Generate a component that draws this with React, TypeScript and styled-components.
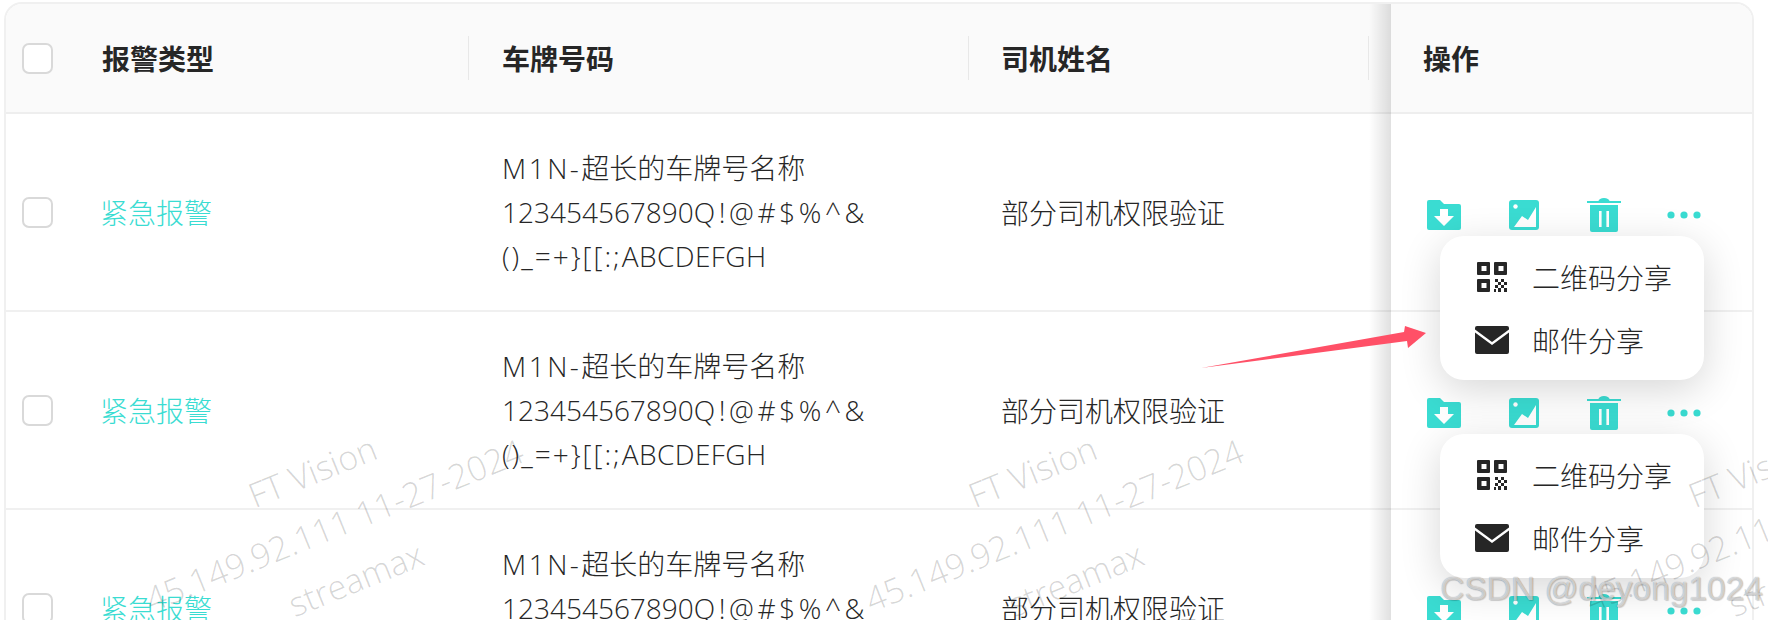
import React from 'react'
import styled, { createGlobalStyle, css } from 'styled-components'

const GlobalStyle = createGlobalStyle`
    html, body {
        margin: 0;
        padding: 0;
        height: 620px;
        overflow: hidden;
        background: #fff;
    }
    body {
        font-family: "Open Sans", "Noto Sans CJK SC", sans-serif;
        color: #262626;
    }
`

const CYAN = '#3adcd2'
const INK = '#262626'

const fixedEdge = css`
    &::before {
        content: '';
        position: absolute;
        left: -22px;
        top: 0;
        bottom: -2px;
        width: 22px;
        background: linear-gradient(to left, rgba(0, 0, 0, 0.12), rgba(0, 0, 0, 0));
    }
`

const Page = styled.div`
    position: relative;
    width: 1768px;
    height: 620px;
    overflow: hidden;
    padding: 2px 0 0 4px;
    box-sizing: border-box;
`

const Table = styled.div`
    width: 1750px;
    border: 2px solid #f0f0f0;
    border-bottom: none;
    border-radius: 18px 18px 0 0;
    box-sizing: border-box;
    overflow: hidden;
`

const HeaderRow = styled.div`
    display: grid;
    grid-template-columns: 62px 401px 500px 422px 361px;
    height: 108px;
    background: #fafafa;
    border-bottom: 2px solid #eeeeee;
`

const BodyRow = styled.div`
    display: grid;
    grid-template-columns: 62px 401px 500px 422px 361px;
    height: 196px;
    border-bottom: 2px solid #f0f0f0;
`

const HeaderCell = styled.div<{ $inset?: number; $pad?: number }>`
    position: relative;
    display: flex;
    align-items: center;
    padding-left: ${(p) => p.$pad ?? 32}px;
    font-size: 28px;
    font-weight: 700;
    color: ${INK};

    &::after {
        content: '';
        position: absolute;
        right: ${(p) => p.$inset ?? 0}px;
        top: 32px;
        height: 44px;
        width: 1px;
        background: #e8e8e8;
    }
`

const SelectCell = styled.div`
    display: flex;
    align-items: center;
    padding-left: 16px;
`

const Checkbox = styled.span`
    display: block;
    width: 31px;
    height: 31px;
    box-sizing: border-box;
    border: 2px solid #d9d9d9;
    border-radius: 7px;
    background: #fff;
`

const Cell = styled.div<{ $pad?: number }>`
    display: flex;
    align-items: center;
    padding-left: ${(p) => p.$pad ?? 32}px;
    font-size: 28px;
    font-weight: 300;
    color: ${INK};
`

const AlarmType = styled(Cell)`
    color: ${CYAN};
`

const PlateLines = styled.div`
    line-height: 44px;
    white-space: nowrap;
`

const Latin = styled.span<{ $spacing: number }>`
    letter-spacing: ${(p) => p.$spacing}px;
`

const FixedHeader = styled(HeaderCell)`
    background: #fafafa;
    ${fixedEdge}

    &::after {
        display: none;
    }
`

const ActionCell = styled.div`
    position: relative;
    display: flex;
    align-items: center;
    gap: 40px;
    padding: 6px 0 0 33px;
    background: #fff;
    ${fixedEdge}
`

const ActionIcon = styled.span`
    display: flex;
    align-items: center;
    justify-content: center;
    width: 40px;
    color: ${CYAN};
`

const Menu = styled.div`
    position: absolute;
    z-index: 2;
    left: 49px;
    top: 122px;
    display: flex;
    flex-direction: column;
    justify-content: center;
    gap: 20px;
    width: 264px;
    height: 144px;
    padding-left: 35px;
    box-sizing: border-box;
    background: #fff;
    border-radius: 24px;
    box-shadow: 0 10px 40px rgba(0, 0, 0, 0.16);
`

const MenuItem = styled.div`
    display: flex;
    align-items: center;
    height: 43px;
    font-size: 28px;
    font-weight: 300;
    color: ${INK};
`

const MenuIcon = styled.span`
    display: flex;
    align-items: center;
    justify-content: center;
    width: 34px;
    margin-right: 23px;
`

const Arrow = styled.svg`
    position: absolute;
    z-index: 3;
    left: 1200px;
    top: 324px;
`

const WatermarkTile = styled.div<{ $left: number }>`
    position: absolute;
    z-index: 4;
    left: ${(p) => p.$left}px;
    top: 440px;
    width: 500px;
    height: 170px;
    display: flex;
    flex-direction: column;
    align-items: center;
    justify-content: center;
    transform: rotate(-22deg);
    color: rgba(0, 0, 0, 0.17);
    font-size: 34px;
    font-weight: 300;
    line-height: 58px;
    white-space: nowrap;
    pointer-events: none;
`

const SiteMark = styled.div`
    position: absolute;
    z-index: 5;
    right: 5px;
    bottom: 13px;
    font-family: "Liberation Sans", sans-serif;
    font-size: 33.5px;
    line-height: 36px;
    color: rgba(255, 255, 255, 0.6);
    text-shadow: 0 0 1px rgba(0, 0, 0, 0.4), 1px 1px 1px rgba(0, 0, 0, 0.15);
    white-space: nowrap;
`

const FolderIcon = () => (
    <svg width="34" height="30" viewBox="0 0 34 30">
        <path d="M2 0h11l4 4h15a2 2 0 0 1 2 2v22a2 2 0 0 1-2 2H2a2 2 0 0 1-2-2V2a2 2 0 0 1 2-2z" fill="currentColor" />
        <path d="M13 9h8v7h6L17 26 7 16h6z" fill="#fff" />
    </svg>
)

const ImageIcon = () => (
    <svg width="30" height="30" viewBox="0 0 30 30">
        <rect width="30" height="30" rx="3" fill="currentColor" />
        <circle cx="6.500" cy="6.500" r="2.200" fill="#fff" />
        <path d="M5 27l8-11 6 4 8-13v20z" fill="#fff" />
    </svg>
)

const TrashIcon = () => (
    <svg width="34" height="34" viewBox="0 0 34 34">
        <path d="M0 3h11.500a5.500 3 0 0 1 11 0H34v2H0z" fill="currentColor" />
        <path d="M3 7h28v25a2 2 0 0 1-2 2H5a2 2 0 0 1-2-2z" fill="currentColor" />
        <rect x="12" y="13" width="2.600" height="16" fill="#fff" />
        <rect x="19.400" y="13" width="2.600" height="16" fill="#fff" />
    </svg>
)

const DotsIcon = () => (
    <svg width="34" height="8" viewBox="0 0 34 8">
        <circle cx="4" cy="4" r="3.600" fill="currentColor" />
        <circle cx="17" cy="4" r="3.600" fill="currentColor" />
        <circle cx="30" cy="4" r="3.600" fill="currentColor" />
    </svg>
)

const QrIcon = () => (
    <svg width="30" height="30" viewBox="0 0 30 30">
        <path fillRule="evenodd" d="M1 0h11a1 1 0 0 1 1 1v11a1 1 0 0 1-1 1H1a1 1 0 0 1-1-1V1a1 1 0 0 1 1-1zm3.500 4v5h5V4z" fill={INK} />
        <path fillRule="evenodd" d="M18 0h11a1 1 0 0 1 1 1v11a1 1 0 0 1-1 1H18a1 1 0 0 1-1-1V1a1 1 0 0 1 1-1zm3.500 4v5h5V4z" fill={INK} />
        <path fillRule="evenodd" d="M1 17h11a1 1 0 0 1 1 1v11a1 1 0 0 1-1 1H1a1 1 0 0 1-1-1V18a1 1 0 0 1 1-1zm3.500 4v5h5v-5z" fill={INK} />
        <path d="M18 17h3v3h-3zM24 17h3v3h-3zM21 20h3v3h-3zM27 20h3v3h-3zM18 23h3v3h-3zM24 23h3v3h-3zM21 26h3v4h-3zM27 26h3v4h-3zM17 27h2v3h-2z" fill={INK} />
    </svg>
)

const MailIcon = () => (
    <svg width="34" height="28" viewBox="0 0 34 28">
        <path d="M2 0h30a2 2 0 0 1 2 2v1.500L17 16 0 3.500V2a2 2 0 0 1 2-2z" fill={INK} />
        <path d="M0 6.500L17 19 34 6.500V26a2 2 0 0 1-2 2H2a2 2 0 0 1-2-2z" fill={INK} />
    </svg>
)

const PlateText = () => (
    <PlateLines>
        <div><Latin $spacing={2.5}>M1N-</Latin>超长的车牌号名称</div>
        <div>123454567890<Latin $spacing={3.6}>Q!@#$%^&amp;</Latin></div>
        <div><Latin $spacing={2}>()_=+{'}'}[[:;</Latin><Latin $spacing={0.4}>ABCDEFGH</Latin></div>
    </PlateLines>
)

const rows = [{ menu: true }, { menu: true }, { menu: false }]
const tiles = [84, 804, 1524]

const App: React.FC = () => {
    return (
        <Page>
            <GlobalStyle />
            <Table>
                <HeaderRow>
                    <SelectCell><Checkbox /></SelectCell>
                    <HeaderCell $pad={34}>报警类型</HeaderCell>
                    <HeaderCell $pad={33}>车牌号码</HeaderCell>
                    <HeaderCell $inset={22}>司机姓名</HeaderCell>
                    <FixedHeader>操作</FixedHeader>
                </HeaderRow>
                {rows.map((row, i) => (
                    <BodyRow key={i}>
                        <SelectCell><Checkbox /></SelectCell>
                        <AlarmType $pad={32}>紧急报警</AlarmType>
                        <Cell $pad={33}><PlateText /></Cell>
                        <Cell>部分司机权限验证</Cell>
                        <ActionCell>
                            <ActionIcon><FolderIcon /></ActionIcon>
                            <ActionIcon><ImageIcon /></ActionIcon>
                            <ActionIcon><TrashIcon /></ActionIcon>
                            <ActionIcon><DotsIcon /></ActionIcon>
                            {row.menu && (
                                <Menu>
                                    <MenuItem><MenuIcon><QrIcon /></MenuIcon>二维码分享</MenuItem>
                                    <MenuItem><MenuIcon><MailIcon /></MenuIcon>邮件分享</MenuItem>
                                </Menu>
                            )}
                        </ActionCell>
                    </BodyRow>
                ))}
            </Table>
            <Arrow width="228" height="46" viewBox="0 0 228 46">
                <path d="M1 44L204 8l1-6 21 7-18 15-1-7z" fill="#ff5067" />
            </Arrow>
            {tiles.map((left) => (
                <WatermarkTile key={left} $left={left}>
                    <div>FT Vision</div>
                    <div>45.149.92.111 11-27-2024</div>
                    <div>streamax</div>
                </WatermarkTile>
            ))}
            <SiteMark>CSDN @deyong1024</SiteMark>
        </Page>
    )
}

export default App
